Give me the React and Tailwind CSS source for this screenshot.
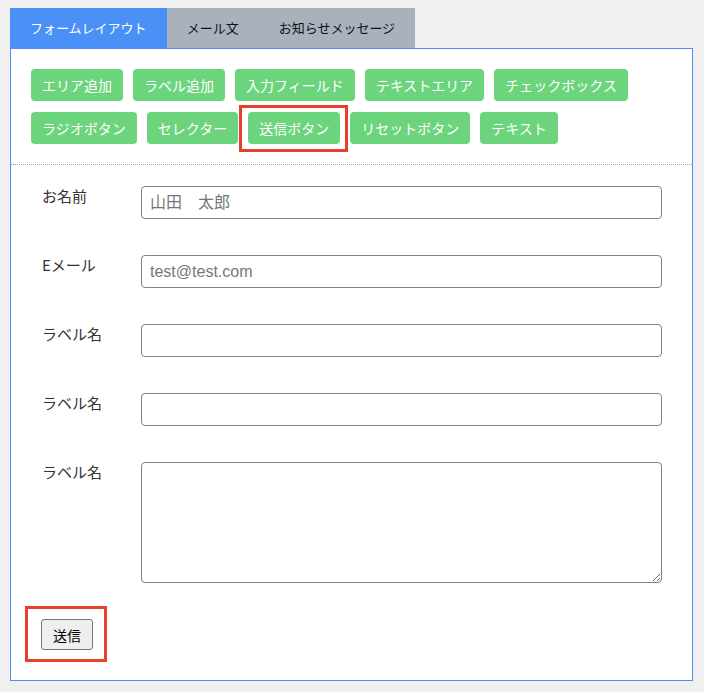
import React from 'react';

const TABS = [
  { label: 'フォームレイアウト', active: true },
  { label: 'メール文', active: false },
  { label: 'お知らせメッセージ', active: false },
];

const TOOL_ROWS = [
  ['エリア追加', 'ラベル追加', '入力フィールド', 'テキストエリア', 'チェックボックス'],
  ['ラジオボタン', 'セレクター', '送信ボタン', 'リセットボタン', 'テキスト'],
];

const FIELDS = [
  { label: 'お名前', placeholder: '山田　太郎' },
  { label: 'Eメール', placeholder: 'test@test.com' },
  { label: 'ラベル名', placeholder: '' },
  { label: 'ラベル名', placeholder: '' },
];

const jp = { fontFamily: '"Noto Sans CJK JP", "Noto Sans", sans-serif' };

function ToolButton({ label }) {
  const button = (
    <button
      type="button"
      className="h-[32px] rounded-[4px] bg-[#6bd47d] px-[11px] pb-[1px] text-[14px] font-normal leading-none text-white"
    >
      {label}
    </button>
  );

  if (label !== '送信ボタン') return button;

  // 注目枠（スクリーンショットの赤枠）
  return (
    <div className="relative">
      {button}
      <span className="pointer-events-none absolute -top-[7px] -bottom-[8px] -left-[9px] -right-[8px] border-[3px] border-[#e6402a]" />
    </div>
  );
}

function FieldRow({ label, placeholder }) {
  return (
    <div className="flex items-start">
      <label className="w-[100px] shrink-0 pl-[1px] text-[15px] leading-5 text-[#333]" style={jp}>
        {label}
      </label>
      <input
        type="text"
        placeholder={placeholder}
        className="h-[33px] flex-1 rounded-[4px] border border-[#7a8290] bg-white px-[8px] text-[16px] text-[#333] placeholder:text-[#777] focus:outline-none"
        style={{ fontFamily: '"Liberation Sans", "Noto Sans CJK JP", sans-serif' }}
      />
    </div>
  );
}

export default function App() {
  return (
    <div className="min-h-screen bg-[#f0f0f0] px-[10px] pt-[8px]" style={jp}>
      {/* タブ */}
      <div className="flex">
        {TABS.map((tab) => (
          <div
            key={tab.label}
            className={
              tab.active
                ? 'flex h-[40px] items-center bg-[#4a90f7] px-[20px] text-[13px] text-white'
                : 'flex h-[40px] items-center bg-[#a8b1bc] px-[20px] text-[13px] text-[#111]'
            }
          >
            {tab.label}
          </div>
        ))}
      </div>

      {/* パネル */}
      <div className="w-[683px] border border-[#4a90f7] bg-white">
        <div className="flex flex-col gap-[11px] p-[20px]">
          {TOOL_ROWS.map((row, i) => (
            <div key={i} className="flex gap-[10px]">
              {row.map((label) => (
                <ToolButton key={label} label={label} />
              ))}
            </div>
          ))}
        </div>

        <div className="border-t border-dotted border-[#a0a0a0]" />

        <form className="flex flex-col gap-[36px] px-[30px] pt-[21px] pb-[30px]" onSubmit={(e) => e.preventDefault()}>
          {FIELDS.map((f, i) => (
            <FieldRow key={i} label={f.label} placeholder={f.placeholder} />
          ))}

          <div className="flex items-start">
            <label className="w-[100px] shrink-0 pl-[1px] text-[15px] leading-5 text-[#333]">ラベル名</label>
            <textarea className="h-[121px] flex-1 rounded-[4px] border border-[#7a8290] bg-white px-[8px] py-[4px] text-[16px] focus:outline-none" />
          </div>

          <div>
            <div className="relative inline-block">
              <button
                type="submit"
                className="h-[31px] w-[52px] rounded-[3px] border border-[#767676] bg-[#efefef] text-[14px] leading-none text-black"
              >
                送信
              </button>
              <span className="pointer-events-none absolute -top-[13px] -bottom-[12px] -left-[16px] -right-[14px] border-[3px] border-[#e6402a]" />
            </div>
          </div>
        </form>
      </div>
    </div>
  );
}
